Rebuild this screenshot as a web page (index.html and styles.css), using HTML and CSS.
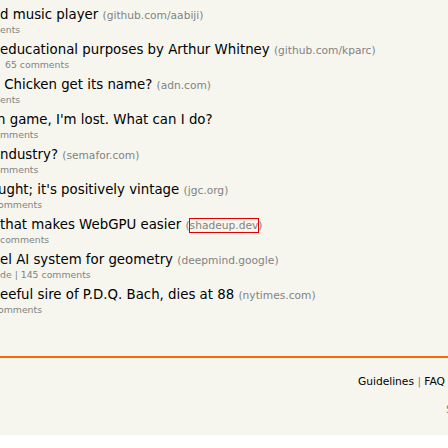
FILE: index.html
```html
<!DOCTYPE html>
<html>
<head>
<meta charset="utf-8">
<link rel="stylesheet" href="styles.css">
</head>
<body>
<div class="page">
  <div class="list">
    <div class="item">
      <div class="title"><span class="t">d music player</span> <span class="site">(github.com/aabiji)</span></div>
      <div class="sub">ents</div>
    </div>
    <div class="item">
      <div class="title"><span class="t">educational purposes by Arthur Whitney</span> <span class="site">(github.com/kparc)</span></div>
      <div class="sub pad">65 comments</div>
    </div>
    <div class="item">
      <div class="title"><span class="t"> Chicken get its name?</span> <span class="site">(adn.com)</span></div>
      <div class="sub">ents</div>
    </div>
    <div class="item">
      <div class="title cut"><span class="t">n game, I'm lost. What can I do?</span></div>
      <div class="sub">mments</div>
    </div>
    <div class="item">
      <div class="title"><span class="t">ndustry?</span> <span class="site">(semafor.com)</span></div>
      <div class="sub">mments</div>
    </div>
    <div class="item">
      <div class="title cut2"><span class="t">ught; it's positively vintage</span> <span class="site">(jgc.org)</span></div>
      <div class="sub cut2">omments</div>
    </div>
    <div class="item">
      <div class="title"><span class="t">that makes WebGPU easier</span> <span class="site">(<span class="ring">shadeup.dev</span>)</span></div>
      <div class="sub">comments</div>
    </div>
    <div class="item">
      <div class="title"><span class="t">el AI system for geometry</span> <span class="site">(deepmind.google)</span></div>
      <div class="sub">de | 145 comments</div>
    </div>
    <div class="item">
      <div class="title"><span class="t">eeful sire of P.D.Q. Bach, dies at 88</span> <span class="site">(nytimes.com)</span></div>
      <div class="sub cut2">omments</div>
    </div>
  </div>
  <div class="rule"></div>
  <div class="footer">
    <div class="links"><span class="lk">Guidelines</span> <span class="sep">|</span> <span class="lk">FAQ</span></div>
    <div class="search">Search:</div>
  </div>
</div>
</body>
</html>
```
FILE: styles.css
```css
html, body {
  margin: 0;
  padding: 0;
  background: #ffffff;
  overflow: hidden;
}
.page {
  width: 448px;
  height: 435px;
  background: #f6f6ef;
  font-family: "DejaVu Sans", Verdana, sans-serif;
  overflow: hidden;
}
.list {
  padding-top: 6px;
}
.item {
  height: 35px;
}
.title {
  height: 18px;
  line-height: 18px;
  font-size: 13.33px;
  color: #000;
  white-space: pre;
}
.title.cut {
  text-indent: -3px;
}
.title.cut2, .sub.cut2 {
  text-indent: -2px;
}
.site {
  font-size: 10.67px;
  color: #828282;
}
.ring {
  outline: 1px solid #e00000;
}
.sub {
  height: 12px;
  line-height: 12px;
  font-size: 9.33px;
  color: #828282;
  white-space: pre;
}
.sub.pad {
  padding-left: 5px;
}
.rule {
  margin-top: 35px;
  height: 2px;
  background: #ff6600;
}
.footer {
  padding-top: 18px;
}
.links {
  text-align: right;
  padding-right: 3px;
  font-size: 10.67px;
  line-height: 12px;
  color: #000;
}
.sep {
  color: #828282;
}
.search {
  margin-top: 15px;
  margin-left: 446px;
  font-size: 10.67px;
  color: #828282;
  white-space: nowrap;
}
```
